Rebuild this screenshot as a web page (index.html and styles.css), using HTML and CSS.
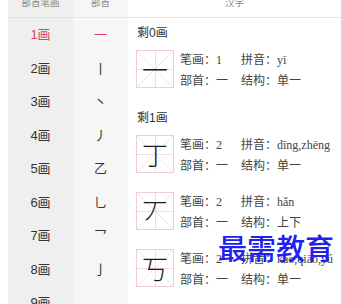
FILE: index.html
```html
<!DOCTYPE html>
<html lang="zh-CN">
<head>
  <meta charset="UTF-8">
  <title>部首查字</title>
  <link rel="stylesheet" href="styles.css">
</head>
<body>

<div class="page">
  <div class="col col-stroke">
    <div class="head"><span>部首笔画</span></div>
    <ul class="list">
      <li class="active">1画</li>
      <li>2画</li>
      <li>3画</li>
      <li>4画</li>
      <li>5画</li>
      <li>6画</li>
      <li>7画</li>
      <li>8画</li>
      <li>9画</li>
    </ul>
  </div>

  <div class="col col-radical">
    <div class="head"><span>部首</span></div>
    <ul class="list">
      <li class="active">一</li>
      <li>丨</li>
      <li>丶</li>
      <li>丿</li>
      <li>乙</li>
      <li>乚</li>
      <li>乛</li>
      <li>亅</li>
      <li></li>
    </ul>
  </div>

  <div class="col col-chars">
    <div class="head"><span>汉字</span></div>

    <div class="section">
      <div class="section-title">剩0画</div>
      <div class="card">
        <div class="grid-box"><span class="glyph">一</span></div>
        <div class="info">
          <div class="info-row"><span class="info-cell">笔画：1</span><span class="info-cell">拼音：yī</span></div>
          <div class="info-row"><span class="info-cell">部首：一</span><span class="info-cell">结构：单一</span></div>
        </div>
      </div>
    </div>

    <div class="section">
      <div class="section-title">剩1画</div>
      <div class="card">
        <div class="grid-box"><span class="glyph">丁</span></div>
        <div class="info">
          <div class="info-row"><span class="info-cell">笔画：2</span><span class="info-cell">拼音：dīng,zhēng</span></div>
          <div class="info-row"><span class="info-cell">部首：一</span><span class="info-cell">结构：单一</span></div>
        </div>
      </div>
      <div class="card">
        <div class="grid-box"><span class="glyph">丆</span></div>
        <div class="info">
          <div class="info-row"><span class="info-cell">笔画：2</span><span class="info-cell">拼音：hǎn</span></div>
          <div class="info-row"><span class="info-cell">部首：一</span><span class="info-cell">结构：上下</span></div>
        </div>
      </div>
      <div class="card">
        <div class="grid-box"><span class="glyph">丂</span></div>
        <div class="info">
          <div class="info-row"><span class="info-cell">笔画：2</span><span class="info-cell">拼音：kǎo,qiāo,yú</span></div>
          <div class="info-row"><span class="info-cell">部首：一</span><span class="info-cell">结构：单一</span></div>
        </div>
      </div>
      <div class="card">
        <div class="grid-box"><span class="glyph">七</span></div>
        <div class="info">
          <div class="info-row"><span class="info-cell">笔画：2</span><span class="info-cell">拼音：qī</span></div>
        </div>
      </div>
    </div>
  </div>

  <div class="watermark">最需教育</div>
</div>

</body>
</html>
```

FILE: styles.css
```css
/* Radical lookup page */
* {
  box-sizing: border-box;
}
body {
  margin: 0;
  background-color: #ffffff;
  font-family: "Liberation Sans", "Noto Sans CJK SC", sans-serif;
  color: #333333;
}
.page {
  position: relative;
  display: flex;
  height: 304px;
  overflow: hidden;
  padding-left: 8px;
}
.col {
  height: 100%;
}
.col-stroke {
  width: 65px;
  background-color: #efefef;
}
.col-radical {
  width: 55px;
  background-color: #f6f6f6;
}
.col-chars {
  flex: 1;
  background-color: #ffffff;
}
.head {
  height: 18px;
  border-bottom: 1px solid #e4e4e4;
  text-align: center;
  overflow: hidden;
  font-size: 9.5px;
  color: #8a8a8a;
}
.head span {
  display: block;
  line-height: 10px;
  margin-top: -2px;
}
.list {
  list-style: none;
  margin: 0;
  padding: 0;
}
.list li {
  height: 33.5px;
  line-height: 33.5px;
  text-align: center;
  font-size: 13px;
  color: #333333;
}
.list li.active {
  color: #e0405e;
}

/* character list */
.section {
  padding: 5px 0 0 8px;
  margin-bottom: -5px;
}
.section + .section {
  margin-top: 20px;
}
.section-title {
  line-height: 20px;
  font-size: 12px;
  margin-left: 1px;
  margin-bottom: 7px;
  color: #333333;
}
.card {
  display: flex;
  height: 38px;
  margin-bottom: 19px;
}
.grid-box {
  flex-shrink: 0;
  width: 38px;
  height: 38px;
  border: 1px solid #efcdd2;
  background:
    linear-gradient(#f3dde0, #f3dde0) center / 100% 1px no-repeat,
    linear-gradient(#f3dde0, #f3dde0) center / 1px 100% no-repeat,
    linear-gradient(45deg, transparent 49.3%, #f5e2e5 49.3%, #f5e2e5 50.7%, transparent 50.7%),
    linear-gradient(-45deg, transparent 49.3%, #f5e2e5 49.3%, #f5e2e5 50.7%, transparent 50.7%);
  display: flex;
  justify-content: center;
  align-items: center;
}
.glyph {
  font-family: "Noto Sans CJK SC", sans-serif;
  font-weight: 300;
  font-size: 26px;
  line-height: 1;
  color: #1a1a1a;
}
.info {
  flex-shrink: 0;
  margin-left: 6px;
  font-family: "Liberation Serif", "Noto Sans CJK SC", serif;
  font-size: 12px;
  color: #444444;
}
.info-row {
  display: flex;
  line-height: 21px;
  white-space: nowrap;
}
.info-cell:first-child {
  flex-shrink: 0;
  width: 61px;
}
.watermark {
  position: absolute;
  left: 218px;
  top: 231px;
  font-family: "Noto Sans CJK SC", sans-serif;
  font-weight: 500;
  font-size: 29px;
  line-height: 32px;
  color: #2020f0;
}
```
